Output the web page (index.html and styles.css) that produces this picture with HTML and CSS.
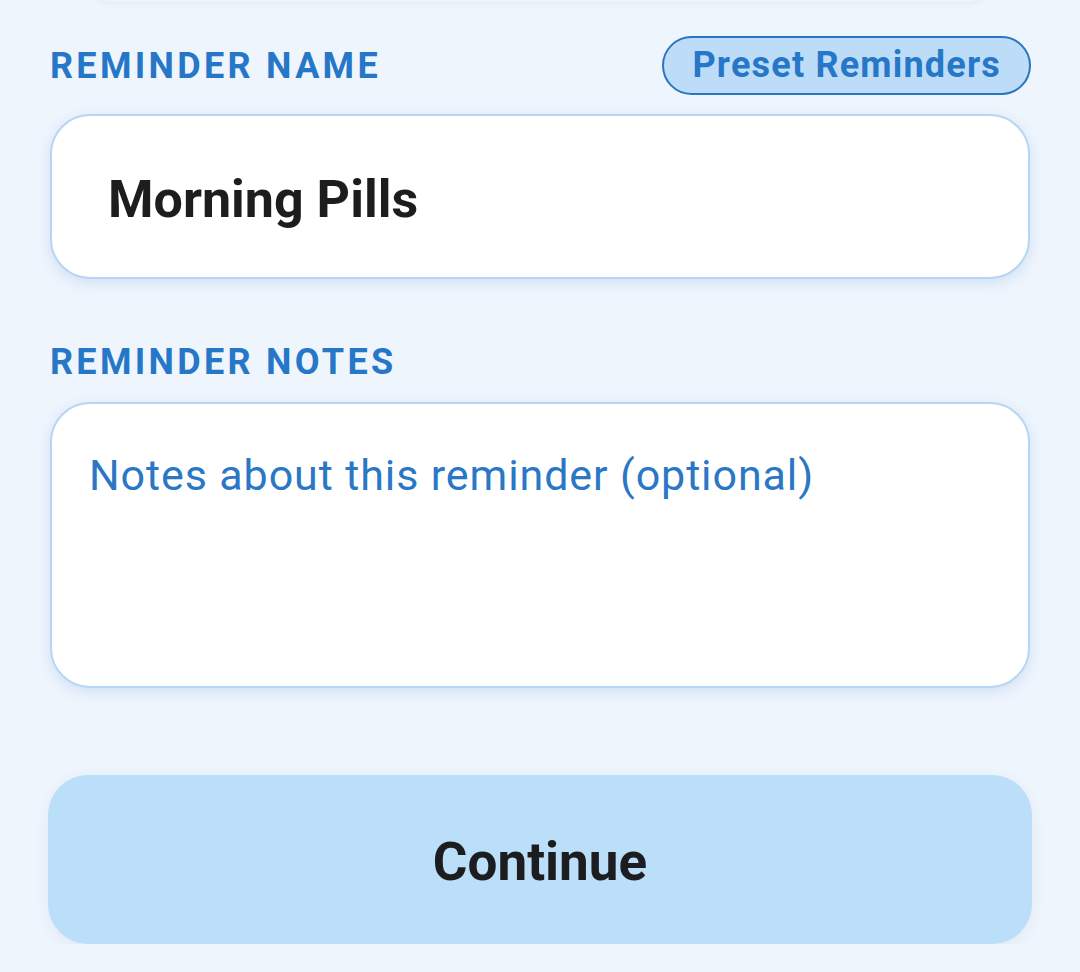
FILE: index.html
```html
<!DOCTYPE html>
<html lang="en">
<head>
  <meta charset="UTF-8">
  <meta name="viewport" content="width=device-width, initial-scale=1.0">
  <title>New Reminder</title>
  <link rel="stylesheet" href="styles.css">
</head>
<body>
  <div class="top-card"></div>

  <form class="reminder-form">
    <div class="field-head">
      <label for="reminderName">Reminder Name</label>
      <button type="button" class="preset-btn">Preset Reminders</button>
    </div>
    <input type="text" id="reminderName" class="name-input" value="Morning Pills">

    <label for="reminderNotes" class="notes-label">Reminder Notes</label>
    <textarea id="reminderNotes" class="notes-input" placeholder="Notes about this reminder (optional)"></textarea>

    <button type="button" class="continue-btn">Continue</button>
  </form>
</body>
</html>
```

FILE: styles.css
```css
body {
  font-family: Roboto, 'Noto Sans', sans-serif;
  background-color: #eff5fd;
  margin: 0;
  overflow: hidden;
}
.top-card {
  height: 40px;
  margin: -38px 82px 0;
  background-color: #f0f4fa;
  border-radius: 0 0 32px 32px;
  box-shadow: 0 2px 6px rgba(40, 70, 110, 0.06);
}
.reminder-form {
  display: flex;
  flex-direction: column;
  padding: 0 49px 0 50px;
}
.field-head {
  display: flex;
  align-items: center;
  justify-content: space-between;
  margin-top: 34px;
}
label {
  display: block;
  font-size: 36px;
  line-height: 40px;
  font-weight: 700;
  letter-spacing: 3.3px;
  text-transform: uppercase;
  color: #2677c8;
}
.preset-btn {
  font-family: inherit;
  font-size: 36px;
  line-height: 43px;
  font-weight: 700;
  letter-spacing: 1.2px;
  color: #2677c8;
  background-color: #bcdcf8;
  border: 2px solid #2a74c0;
  border-radius: 30px;
  padding: 6px 28px 6px 28px;
  cursor: pointer;
}
.name-input,
.notes-input {
  font-family: inherit;
  background-color: #ffffff;
  border: 2px solid #b6d6f3;
  border-radius: 40px;
  box-shadow: 0 4px 14px rgba(110, 160, 215, 0.24);
  box-sizing: border-box;
  width: 980px;
  outline: none;
}
.name-input {
  height: 165px;
  margin-top: 19px;
  padding: 6px 56px 0;
  font-size: 52px;
  font-weight: 700;
  color: #1d1d1f;
}
.notes-label {
  margin-top: 63px;
}
.notes-input {
  height: 286px;
  margin-top: 20px;
  padding: 46px 37px;
  font-size: 43px;
  line-height: 50px;
  letter-spacing: 0.9px;
  color: #1d1d1f;
  resize: none;
}
.notes-input::placeholder {
  color: #2a77c6;
  opacity: 1;
}
.continue-btn {
  font-family: inherit;
  width: 984px;
  height: 169px;
  margin: 87px 0 0 -2px;
  padding-top: 6px;
  font-size: 53px;
  font-weight: 700;
  color: #1c1d20;
  background-color: #bbdef9;
  border: none;
  border-radius: 40px;
  box-shadow: 0 4px 14px rgba(60, 90, 130, 0.08);
  cursor: pointer;
}
```
